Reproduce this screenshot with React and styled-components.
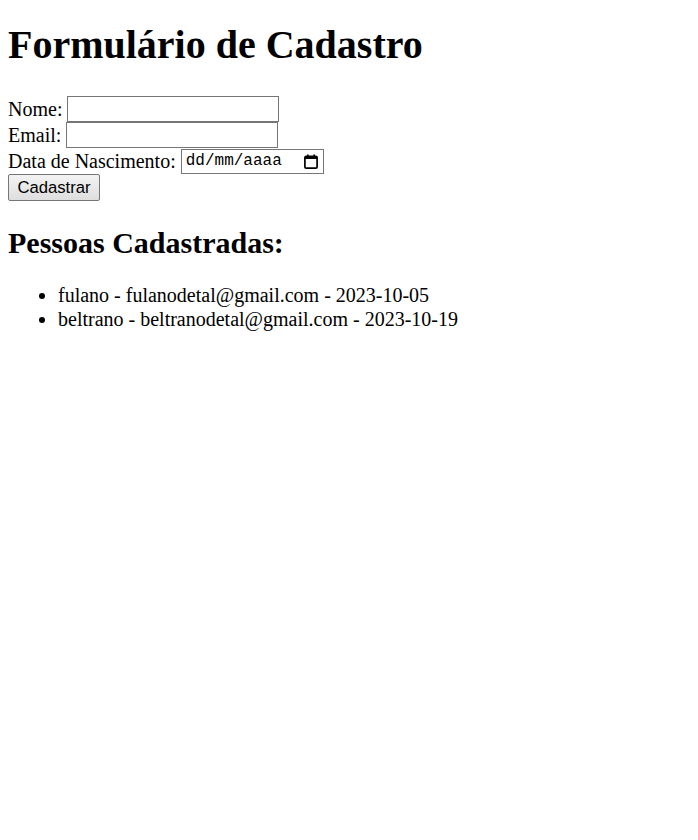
import React, { useState } from 'react';
import styled, { createGlobalStyle } from 'styled-components';

const GlobalStyle = createGlobalStyle`
  body {
    margin: 8px;
    font-family: 'Liberation Serif', 'Times New Roman', serif;
    font-size: 20px;
    color: #000;
    background: #fff;
  }
`;

const Title = styled.h1`
  font-size: 40px;
  font-weight: bold;
  margin: 14px 0 28px;
  line-height: 46px;
`;

const Form = styled.form`
  display: flex;
  flex-direction: column;
  align-items: flex-start;
`;

const Field = styled.label`
  display: flex;
  align-items: center;
  height: 26px;
  line-height: 23px;
  gap: 5px;
`;

const TextInput = styled.input`
  box-sizing: border-box;
  width: 212px;
  height: 26px;
  margin: 0;
  padding: 1px 2px;
  border: 1px solid #767676;
  font-family: 'Liberation Sans', Arial, sans-serif;
  font-size: 16px;
  outline: none;
`;

const DateBox = styled.span`
  position: relative;
  display: inline-flex;
  align-items: center;
  box-sizing: border-box;
  width: 143px;
  height: 25px;
  border: 1px solid #767676;
  padding: 0 0 0 4px;
`;

const DateInput = styled.input`
  width: 104px;
  border: none;
  padding: 0;
  outline: none;
  font-family: 'Liberation Mono', 'Courier New', monospace;
  font-size: 16px;
  color: #000;
  &::placeholder {
    color: #000;
    opacity: 1;
  }
`;

const CalendarIcon = styled.svg`
  position: absolute;
  right: 5px;
  top: 4px;
`;

const SubmitButton = styled.button`
  box-sizing: border-box;
  width: 92px;
  height: 27px;
  margin: 0;
  padding: 1px 6px;
  border: 1px solid #767676;
  border-radius: 2px;
  background: linear-gradient(#f3f3f3, #dedede);
  font-family: 'Liberation Sans', Arial, sans-serif;
  font-size: 16.67px;
  color: #000;
`;

const SectionTitle = styled.h2`
  font-size: 30px;
  font-weight: bold;
  margin: 25px 0 23px;
  line-height: 34px;
`;

const PeopleList = styled.ul`
  margin: 0;
  padding-left: 50px;
  list-style: disc;
`;

const Person = styled.li`
  line-height: 24px;
`;

const initialPeople = [
  { nome: 'fulano', email: 'fulanodetal@gmail.com', nascimento: '2023-10-05' },
  { nome: 'beltrano', email: 'beltranodetal@gmail.com', nascimento: '2023-10-19' },
];

const App = () => {
  const [people, setPeople] = useState(initialPeople);
  const [nome, setNome] = useState('');
  const [email, setEmail] = useState('');
  const [nascimento, setNascimento] = useState('');

  const onSubmit = (e) => {
    e.preventDefault();
    if (!nome) return;
    setPeople([...people, { nome, email, nascimento }]);
    setNome('');
    setEmail('');
    setNascimento('');
  };

  return (
    <>
      <GlobalStyle />
      <Title>Formulário de Cadastro</Title>
      <Form onSubmit={onSubmit}>
        <Field>
          Nome:
          <TextInput value={nome} onChange={(e) => setNome(e.target.value)} />
        </Field>
        <Field>
          Email:
          <TextInput value={email} onChange={(e) => setEmail(e.target.value)} />
        </Field>
        <Field>
          Data de Nascimento:
          <DateBox>
            <DateInput
              placeholder="dd/mm/aaaa"
              value={nascimento}
              onChange={(e) => setNascimento(e.target.value)}
            />
            <CalendarIcon width="14" height="15" viewBox="0 0 14 15">
              <rect x="0.9" y="2.4" width="12.2" height="11.7" rx="1.2" fill="none" stroke="#000" strokeWidth="1.7" />
              <rect x="0.9" y="2.4" width="12.2" height="2.6" fill="#000" />
              <rect x="3" y="0.5" width="1.6" height="2.5" fill="#000" />
              <rect x="9.4" y="0.5" width="1.6" height="2.5" fill="#000" />
            </CalendarIcon>
          </DateBox>
        </Field>
        <SubmitButton type="submit">Cadastrar</SubmitButton>
      </Form>
      <SectionTitle>Pessoas Cadastradas:</SectionTitle>
      <PeopleList>
        {people.map((p) => (
          <Person key={p.email}>
            {p.nome} - {p.email} - {p.nascimento}
          </Person>
        ))}
      </PeopleList>
    </>
  );
};

export default App;
